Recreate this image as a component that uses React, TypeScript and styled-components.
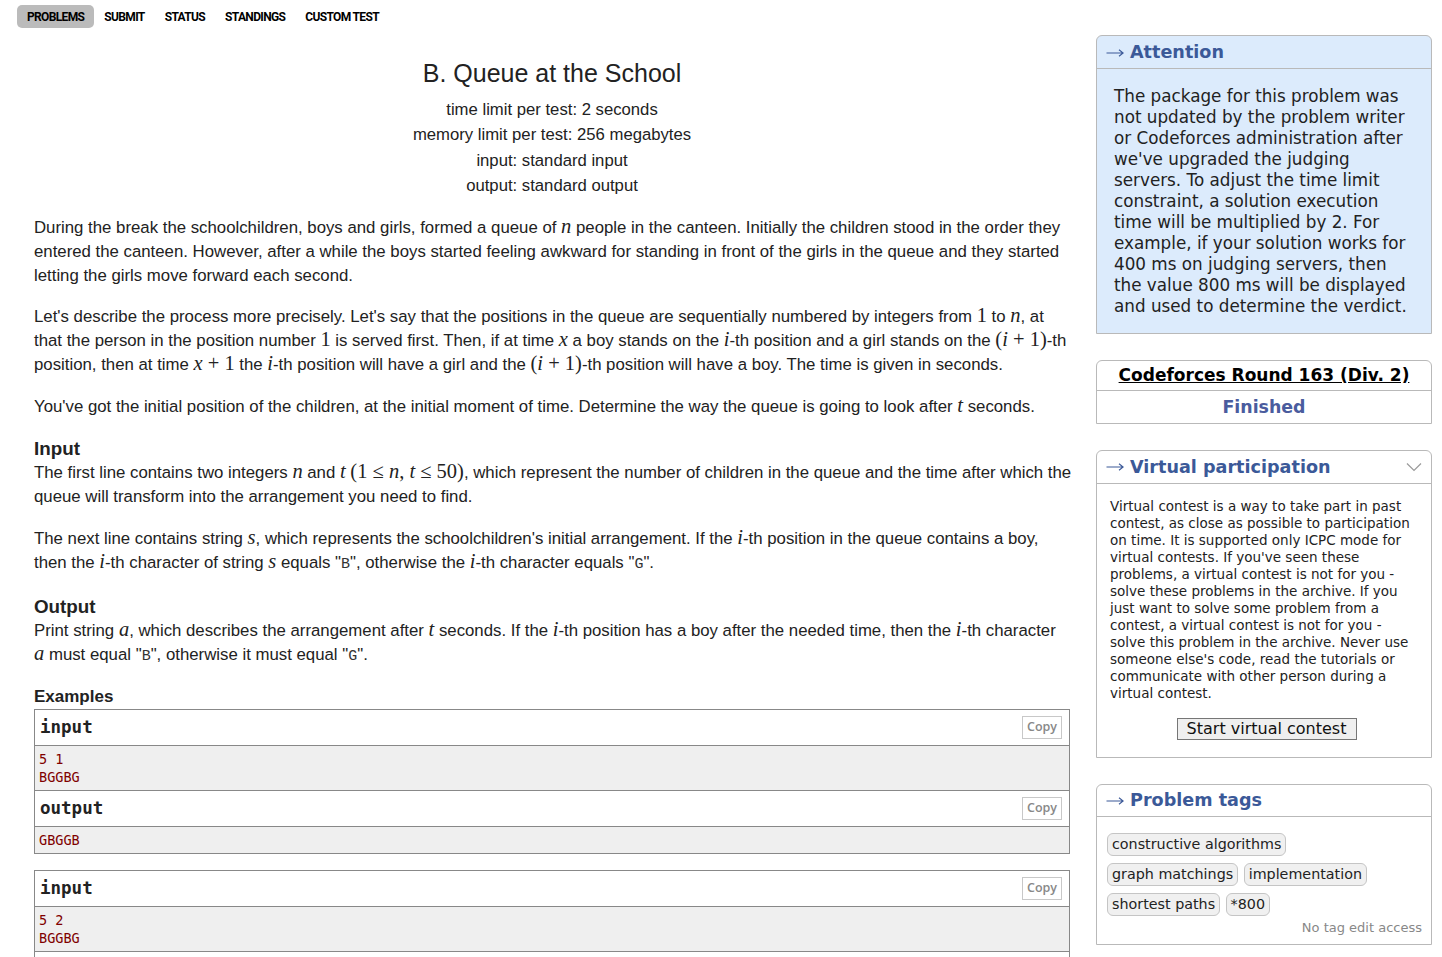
import React from "react";
import styled, { createGlobalStyle } from "styled-components";

const GlobalStyle = createGlobalStyle`
  html, body { margin: 0; padding: 0; background: #fff; }
  body { font-family: "Liberation Sans", Arial, sans-serif; color: #222; }
`;

const Page = styled.div`
  padding-top: 5px;
`;

const Nav = styled.nav`
  display: flex;
  padding-left: 17px;
  height: 23px;
`;

const NavItem = styled.a<{ $active?: boolean }>`
  display: flex;
  align-items: center;
  padding: 0 10px;
  font-family: Roboto, "Liberation Sans", sans-serif;
  font-weight: 700;
  font-size: 12px;
  letter-spacing: -0.65px;
  color: #000;
  text-decoration: none;
  border-radius: 5px;
  background: ${(p) => (p.$active ? "#bbbbbb" : "transparent")};
`;

const Main = styled.div`
  display: flex;
  align-items: flex-start;
  margin-top: 7px;
`;

const LeftCol = styled.div`
  margin-left: 34px;
  width: 1036px;
  padding-top: 23px;
`;

const Title = styled.div`
  text-align: center;
  font-size: 25px;
  line-height: 30px;
  margin-bottom: 9px;
`;

const Spec = styled.div`
  text-align: center;
  font-size: 16.7px;
  line-height: 25.3px;
`;

const Statement = styled.div`
  font-size: 16.8px;
  line-height: 24px;
  margin-top: 17.5px;
`;

const Para = styled.p`
  margin: 0 0 17.5px;
  white-space: nowrap;
`;

const SectionTitle = styled.div`
  font-size: 18.8px;
  font-weight: 700;
  line-height: 25px;
`;

const M = styled.span<{ $i?: boolean }>`
  font-family: "Liberation Serif", "Times New Roman", serif;
  font-size: 1.22em;
  font-style: ${(p) => (p.$i ? "italic" : "normal")};
  line-height: 1;
`;

const Code = styled.span`
  font-family: "Liberation Mono", "Courier New", monospace;
  font-size: 15px;
  color: #333;
`;

const ExamplesLabel = styled.div`
  font-size: 17px;
  font-weight: 700;
  line-height: 20px;
  margin: 7px 0 2px;
`;

const SampleBox = styled.div`
  border: 1px solid #888;
  margin-bottom: 16px;
`;

const SampleHead = styled.div<{ $divider?: boolean }>`
  display: flex;
  justify-content: space-between;
  align-items: center;
  height: 35px;
  padding: 0 7px 0 5px;
  font-family: "DejaVu Sans Mono", "Liberation Mono", monospace;
  font-weight: 700;
  font-size: 17.5px;
  color: #222;
  border-bottom: 1px solid #888;
  border-top: ${(p) => (p.$divider ? "1px solid #888" : "none")};
`;

const CopyButton = styled.span`
  display: flex;
  align-items: center;
  justify-content: center;
  width: 38px;
  height: 21px;
  border: 1px solid #c8c8c8;
  background: #fff;
  font-family: "Open Sans", "Liberation Sans", sans-serif;
  font-weight: 600;
  font-size: 12.5px;
  color: #888;
`;

const SampleBody = styled.pre`
  margin: 0;
  background: #efefef;
  padding: 4px 4px;
  font-family: "DejaVu Sans Mono", "Liberation Mono", monospace;
  font-size: 13.5px;
  line-height: 18px;
  color: #800000;
`;

const Sidebar = styled.div`
  margin-left: 26px;
  width: 336px;
  display: flex;
  flex-direction: column;
  gap: 26px;
  font-family: "DejaVu Sans", Verdana, sans-serif;
`;

const Box = styled.div<{ $bg?: string }>`
  border: 1px solid #b9b9b9;
  border-radius: 6px 6px 0 0;
  background: ${(p) => p.$bg || "#fff"};
`;

const BoxHead = styled.div<{ $h?: number }>`
  display: flex;
  align-items: center;
  height: ${(p) => p.$h || 32}px;
  padding: 0 9px;
  border-bottom: 1px solid #b9b9b9;
  color: #3b5998;
  font-weight: 700;
  font-size: 17.6px;
`;

const ArrowIcon = styled.svg`
  flex: none;
  margin-right: 6px;
  margin-top: 1px;
`;

const Arrow = () => (
  <ArrowIcon width="18" height="10" viewBox="0 0 18 10">
    <path d="M0.5 5H17M13 1.8L17.2 5L13 8.2" fill="none" stroke="#3b5998" strokeWidth="1.1" />
  </ArrowIcon>
);

const Grow = styled.span`
  flex: 1;
`;

const AttentionText = styled.div`
  padding: 16.5px 10px 15px 17px;
  font-size: 16.8px;
  line-height: 21.1px;
  color: #222;
  white-space: pre;
`;

const RoundTitle = styled.div`
  height: 29px;
  display: flex;
  align-items: center;
  justify-content: center;
  border-bottom: 1px solid #b9b9b9;
  font-weight: 700;
  font-size: 17px;
  color: #000;
  text-decoration: underline;
`;

const RoundStatus = styled.div`
  height: 32px;
  display: flex;
  align-items: center;
  justify-content: center;
  font-weight: 700;
  font-size: 17.4px;
  color: #4a5c9e;
`;

const VirtualBody = styled.div`
  padding: 14.5px 8px 17px 13px;
  display: flex;
  flex-direction: column;
`;

const VirtualText = styled.div`
  font-size: 13.5px;
  line-height: 17px;
  color: #222;
  white-space: pre;
`;

const StartButton = styled.button`
  align-self: center;
  margin-top: 15.5px;
  width: 180px;
  height: 22px;
  padding: 0;
  border: 1px solid #767676;
  background: #efefef;
  font-family: "DejaVu Sans", Verdana, sans-serif;
  font-size: 16px;
  color: #111;
  line-height: 20px;
`;

const TagsBody = styled.div`
  padding: 16px 9px 8px 10px;
  display: flex;
  flex-direction: column;
  gap: 7px;
`;

const TagRow = styled.div`
  display: flex;
  gap: 5.5px;
`;

const Tag = styled.span`
  display: flex;
  align-items: center;
  height: 21px;
  padding: 0 4px;
  border: 1px solid #c5c5c5;
  border-radius: 6px;
  background: #f0f0f0;
  font-size: 14.3px;
  color: #222;
`;

const NoAccess = styled.div`
  text-align: right;
  font-size: 13px;
  line-height: 16px;
  color: #888;
  margin-top: -3px;
`;

const Chevron = () => (
  <svg width="16" height="10" viewBox="0 0 16 10">
    <polyline points="1,1.5 8,8.5 15,1.5" fill="none" stroke="#9a9a9a" strokeWidth="1.2" />
  </svg>
);

const Example = ({ input, output }: { input: string; output: string }) => (
  <SampleBox>
    <SampleHead>
      input<CopyButton>Copy</CopyButton>
    </SampleHead>
    <SampleBody>{input}</SampleBody>
    <SampleHead $divider>
      output<CopyButton>Copy</CopyButton>
    </SampleHead>
    <SampleBody>{output}</SampleBody>
  </SampleBox>
);

const attention = `The package for this problem was
not updated by the problem writer
or Codeforces administration after
we've upgraded the judging
servers. To adjust the time limit
constraint, a solution execution
time will be multiplied by 2. For
example, if your solution works for
400 ms on judging servers, then
the value 800 ms will be displayed
and used to determine the verdict.`;

const virtualText = `Virtual contest is a way to take part in past
contest, as close as possible to participation
on time. It is supported only ICPC mode for
virtual contests. If you've seen these
problems, a virtual contest is not for you -
solve these problems in the archive. If you
just want to solve some problem from a
contest, a virtual contest is not for you -
solve this problem in the archive. Never use
someone else's code, read the tutorials or
communicate with other person during a
virtual contest.`;

export default function App() {
  return (
    <Page>
      <GlobalStyle />
      <Nav>
        <NavItem $active>PROBLEMS</NavItem>
        <NavItem>SUBMIT</NavItem>
        <NavItem>STATUS</NavItem>
        <NavItem>STANDINGS</NavItem>
        <NavItem>CUSTOM TEST</NavItem>
      </Nav>
      <Main>
        <LeftCol>
          <Title>B. Queue at the School</Title>
          <Spec>time limit per test: 2 seconds</Spec>
          <Spec>memory limit per test: 256 megabytes</Spec>
          <Spec>input: standard input</Spec>
          <Spec>output: standard output</Spec>
          <Statement>
            <Para>
              During the break the schoolchildren, boys and girls, formed a queue of <M $i>n</M> people in the canteen. Initially the children stood in the order they
              <br />
              entered the canteen. However, after a while the boys started feeling awkward for standing in front of the girls in the queue and they started
              <br />
              letting the girls move forward each second.
            </Para>
            <Para>
              Let's describe the process more precisely. Let's say that the positions in the queue are sequentially numbered by integers from <M>1</M> to <M $i>n</M>, at
              <br />
              that the person in the position number <M>1</M> is served first. Then, if at time <M $i>x</M> a boy stands on the <M $i>i</M>-th position and a girl stands on the <M>(</M><M $i>i</M><M> + 1)</M>-th
              <br />
              position, then at time <M $i>x</M><M> + 1</M> the <M $i>i</M>-th position will have a girl and the <M>(</M><M $i>i</M><M> + 1)</M>-th position will have a boy. The time is given in seconds.
            </Para>
            <Para>
              You've got the initial position of the children, at the initial moment of time. Determine the way the queue is going to look after <M $i>t</M> seconds.
            </Para>
            <SectionTitle>Input</SectionTitle>
            <Para>
              The first line contains two integers <M $i>n</M> and <M $i>t</M> <M>(1 ≤ </M><M $i>n</M><M>, </M><M $i>t</M><M> ≤ 50)</M>, which represent the number of children in the queue and the time after which the
              <br />
              queue will transform into the arrangement you need to find.
            </Para>
            <Para>
              The next line contains string <M $i>s</M>, which represents the schoolchildren's initial arrangement. If the <M $i>i</M>-th position in the queue contains a boy,
              <br />
              then the <M $i>i</M>-th character of string <M $i>s</M> equals "<Code>B</Code>", otherwise the <M $i>i</M>-th character equals "<Code>G</Code>".
            </Para>
            <SectionTitle>Output</SectionTitle>
            <Para>
              Print string <M $i>a</M>, which describes the arrangement after <M $i>t</M> seconds. If the <M $i>i</M>-th position has a boy after the needed time, then the <M $i>i</M>-th character
              <br />
              <M $i>a</M> must equal "<Code>B</Code>", otherwise it must equal "<Code>G</Code>".
            </Para>
            <ExamplesLabel>Examples</ExamplesLabel>
            <Example input={"5 1\nBGGBG"} output={"GBGGB"} />
            <Example input={"5 2\nBGGBG"} output={"GGBGB"} />
            <Example input={"4 1\nGGGB"} output={"GGGB"} />
          </Statement>
        </LeftCol>
        <Sidebar>
          <Box $bg="#dcebfc">
            <BoxHead $h={32}>
              <Arrow />
              Attention
            </BoxHead>
            <AttentionText>{attention}</AttentionText>
          </Box>
          <Box>
            <RoundTitle>Codeforces Round 163 (Div. 2)</RoundTitle>
            <RoundStatus>Finished</RoundStatus>
          </Box>
          <Box>
            <BoxHead $h={32}>
              <Arrow />
              <Grow>Virtual participation</Grow>
              <Chevron />
            </BoxHead>
            <VirtualBody>
              <VirtualText>{virtualText}</VirtualText>
              <StartButton>Start virtual contest</StartButton>
            </VirtualBody>
          </Box>
          <Box>
            <BoxHead $h={31}>
              <Arrow />
              Problem tags
            </BoxHead>
            <TagsBody>
              <TagRow>
                <Tag>constructive algorithms</Tag>
              </TagRow>
              <TagRow>
                <Tag>graph matchings</Tag>
                <Tag>implementation</Tag>
              </TagRow>
              <TagRow>
                <Tag>shortest paths</Tag>
                <Tag>*800</Tag>
              </TagRow>
              <NoAccess>No tag edit access</NoAccess>
            </TagsBody>
          </Box>
        </Sidebar>
      </Main>
    </Page>
  );
}
